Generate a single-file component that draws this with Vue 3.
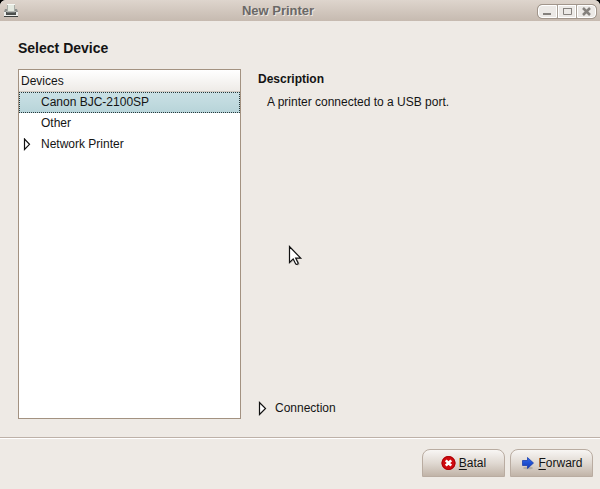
<script setup>
import { ref } from 'vue'

const devices = [
  { name: 'Canon BJC-2100SP', expandable: false },
  { name: 'Other', expandable: false },
  { name: 'Network Printer', expandable: true },
]
const selected = ref('Canon BJC-2100SP')
</script>

<template>
  <div class="window">
    <header class="titlebar">
      <svg class="app-icon" width="16" height="16" viewBox="0 0 16 16" aria-hidden="true">
        <path d="M2 6h2V5h8v1h2l1 3v5H1V9z" fill="#8d908e" />
        <path d="M4 1h8v8H4z" fill="#a9ada7" />
        <path d="M5 1h6v7H5z" fill="#e4e9e0" />
        <path d="M4 1h8v1H4z" fill="#f6f8f4" />
        <path d="M3 8h10v1H3z" fill="#b5b8b4" />
        <path d="M3 9h10v3H3z" fill="#4c504e" />
        <path d="M4 9h8v1H4z" fill="#747876" />
        <path d="M1 9h2v3h10V9h2v4H1z" fill="#ecedea" />
        <path d="M1 13h14v1H1z" fill="#3e413f" />
      </svg>
      <h1 class="caption">New Printer</h1>
      <div class="controls">
        <button type="button" aria-label="Minimize">
          <svg width="9" height="9" viewBox="0 0 9 9"><path d="M0 6h8v2H0z" fill="#85817d" /></svg>
        </button>
        <button type="button" aria-label="Maximize">
          <svg width="9" height="9" viewBox="0 0 9 9"><path d="M.5 1.500h8v6h-8z" fill="none" stroke="#85817d" /><path d="M0 1h9v1H0z" fill="#85817d" /></svg>
        </button>
        <button type="button" aria-label="Close">
          <svg width="9" height="9" viewBox="0 0 9 9"><path d="M1 1l7 7m0-7l-7 7" fill="none" stroke="#85817d" stroke-width="2.500" /></svg>
        </button>
      </div>
    </header>

    <main class="content">
      <h2 class="heading">Select Device</h2>
      <div class="panes">
        <section class="devices" aria-labelledby="devices-label">
          <h3 id="devices-label" class="column-head">Devices</h3>
          <ul class="rows">
            <li v-for="device in devices" :key="device.name">
              <button
                type="button"
                class="row"
                :class="{ selected: selected === device.name }"
                @click="selected = device.name"
              >
                <span class="expander">
                  <svg v-if="device.expandable" width="9" height="13" viewBox="0 0 9 13"><path d="M1.500 1v10.500l5-5.200z" fill="#fff" stroke="#111" stroke-width="1.200" /></svg>
                </span>
                <span>{{ device.name }}</span>
              </button>
            </li>
          </ul>
        </section>

        <section class="details">
          <h3 class="subheading">Description</h3>
          <p class="description">A printer connected to a USB port.</p>
          <button type="button" class="connection">
            <svg width="9" height="15" viewBox="0 0 9 15"><path d="M1.500 1.500v12l6-6z" fill="#fff" stroke="#111" stroke-width="1.200" /></svg>
            <span>Connection</span>
          </button>
          <svg class="pointer" width="16" height="24" viewBox="0 0 16 24" aria-hidden="true">
            <path d="M2.500 2.500v16l3.700-3.600 2.600 5.100c1 1.200 3.400.1 2.900-1.300l-2.400-4.900h4.600z" fill="#000" opacity=".18" />
            <path d="M1.500 1.500v16l3.700-3.600 2.500 5c.8 1.100 2.700.3 2.400-1l-2.400-4.700h5z" fill="#fff" stroke="#111" stroke-width="1.200" />
          </svg>
        </section>
      </div>
    </main>

    <footer class="actions">
      <button type="button" class="action">
        <svg width="16" height="16" viewBox="0 0 16 16" aria-hidden="true">
          <circle cx="7.500" cy="8" r="7" fill="#cf0a0f" />
          <circle cx="7.500" cy="8" r="6.500" fill="none" stroke="#a90006" />
          <path d="M4.800 5.300l5.400 5.400m0-5.400l-5.400 5.400" stroke="#fff" stroke-width="2.600" />
        </svg>
        <span><u>B</u>atal</span>
      </button>
      <button type="button" class="action">
        <svg width="16" height="16" viewBox="0 0 16 16" aria-hidden="true">
          <defs>
            <linearGradient id="arrow-fill" x1="0" y1="0" x2="0" y2="1">
              <stop offset="0" stop-color="#2f6bf0" />
              <stop offset="1" stop-color="#1238b4" />
            </linearGradient>
          </defs>
          <ellipse cx="8" cy="13" rx="5" ry="1.300" fill="#000" opacity=".15" />
          <path d="M2.500 5.500h5v-3l6 5.500-6 5.500v-3h-5z" fill="url(#arrow-fill)" stroke="#1b3fae" stroke-width=".8" />
        </svg>
        <span><u>F</u>orward</span>
      </button>
    </footer>
  </div>
</template>

<style>
body {
  margin: 0;
  background: #000;
}
</style>

<style scoped>
.window {
  display: flex;
  flex-direction: column;
  box-sizing: border-box;
  min-height: 100vh;
  border-radius: 6px 6px 0 0;
  overflow: hidden;
  background: #eeeae5;
  color: #141414;
  font: 12px/21px "Liberation Sans", Arial, sans-serif;
}
h1, h2, h3, p, ul {
  margin: 0;
  padding: 0;
}
button {
  margin: 0;
  padding: 0;
  border: 0;
  background: none;
  color: inherit;
  font: inherit;
}
svg {
  display: block;
  flex: none;
}
.titlebar {
  display: flex;
  align-items: center;
  height: 21px;
  padding: 0 3px;
  background: linear-gradient(#ded5cd, #c6bab0);
}
.caption {
  flex: 1;
  text-align: center;
  color: #6a6866;
  font-size: 13px;
  line-height: 21px;
  font-weight: bold;
  text-shadow: 1px 1px 0 #eee8e2;
}
.controls {
  display: flex;
  box-sizing: border-box;
  height: 15px;
  margin-top: 1px;
  border: 1px solid #a1958b;
  border-radius: 5px;
  overflow: hidden;
  background: #a9a097;
  gap: 1px;
}
.controls button {
  display: grid;
  place-items: center;
  width: 19px;
  height: 13px;
  box-sizing: border-box;
  border: 1px solid #fff;
  background: #ece9e6;
}
.controls button:first-child {
  border-radius: 4px 0 0 4px;
}
.controls button:nth-child(2) {
  width: 18px;
}
.controls button:last-child {
  border-radius: 0 4px 4px 0;
}
.content {
  flex: 1;
  display: flex;
  flex-direction: column;
  gap: 11px;
  padding: 17px 18px 18px;
}
.heading {
  font-size: 14px;
  line-height: 20px;
  font-weight: bold;
}
.panes {
  flex: 1;
  display: flex;
  gap: 17px;
}
.devices {
  flex: 0 0 223px;
  box-sizing: border-box;
  border: 1px solid #a39281;
  background: #fff;
}
.column-head {
  box-sizing: border-box;
  height: 22px;
  padding-left: 2px;
  border-bottom: 1px solid #d2cbc3;
  background: linear-gradient(#fff, #eeebe7);
  font-size: 12px;
  line-height: 22px;
  font-weight: normal;
}
.rows {
  list-style: none;
}
.row {
  display: flex;
  align-items: center;
  box-sizing: border-box;
  width: 100%;
  height: 21px;
  border: 1px solid transparent;
  text-align: left;
}
.row.selected {
  border: 1px dotted #26383b;
  background: linear-gradient(#cbe1e5, #b7d4d9) border-box;
}
.expander {
  width: 18px;
  padding-left: 3px;
  box-sizing: border-box;
  margin-right: 3px;
}
.details {
  position: relative;
  flex: 1;
  display: flex;
  flex-direction: column;
  align-items: flex-start;
}
.subheading {
  font-size: 12px;
  font-weight: bold;
}
.description {
  padding: 2px 0 0 9px;
}
.connection {
  display: flex;
  align-items: center;
  gap: 8px;
  margin-top: auto;
}
.pointer {
  position: absolute;
  left: 30px;
  top: 176px;
}
.actions {
  display: flex;
  justify-content: flex-end;
  gap: 5px;
  padding: 11px 7px 12px;
  border-top: 1px solid #bdb1a8;
  box-shadow: inset 0 1px 0 #fff;
}
.action {
  display: flex;
  align-items: center;
  justify-content: center;
  gap: 2px;
  box-sizing: border-box;
  width: 83px;
  height: 28px;
  border: 1px solid #b9aca1;
  border-radius: 8px 8px 0 0;
  background: linear-gradient(#f8f6f4, #e0d9d2 50%, #c1b4a8);
}
.action u {
  text-underline-offset: 2px;
}
</style>
